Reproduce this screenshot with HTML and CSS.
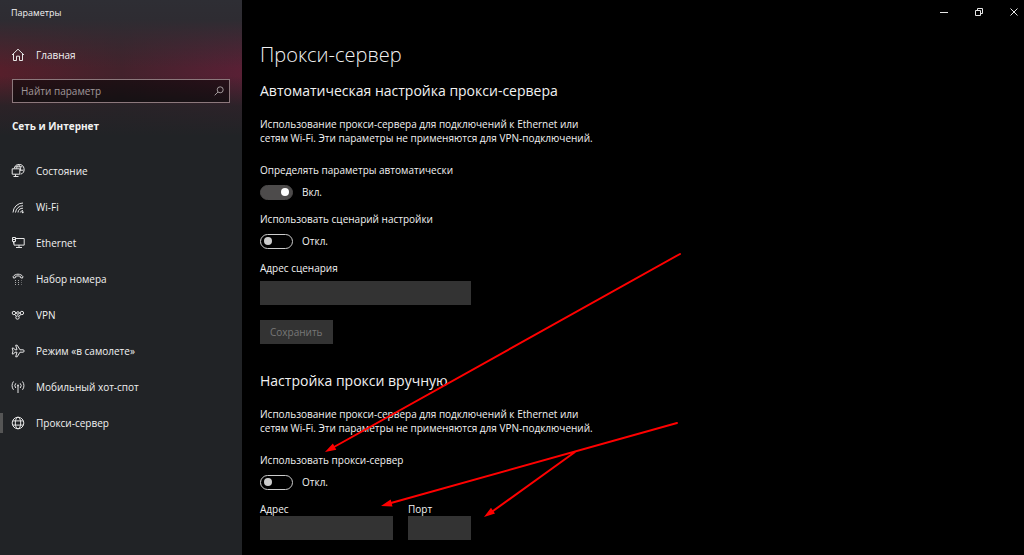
FILE: index.html
```html
<!DOCTYPE html>
<html lang="ru">
<head>
    <meta charset="UTF-8">
    <meta name="viewport" content="width=device-width, initial-scale=1.0">
    <title>Параметры</title>
    <link rel="stylesheet" href="styles.css">
</head>
<body>
    <div class="window">
        <aside class="sidebar">
            <div class="window-title">Параметры</div>
            <a class="nav-link home" href="#">
                <svg class="icon" viewBox="0 0 14 14"><path d="M1 7 7 1.2 13 7M2.5 6v6.500h3V8.200h3v4.300h3V6"/></svg>
                Главная
            </a>
            <form class="search">
                <input type="search" placeholder="Найти параметр" aria-label="Найти параметр">
                <svg class="search-icon" viewBox="0 0 10 10"><circle cx="6.2" cy="3.8" r="3"/><path d="M4 6 .7 9.3"/></svg>
            </form>
            <h2 class="category">Сеть и Интернет</h2>
            <nav>
                <a class="nav-link" href="#">
                    <svg class="icon" viewBox="0 0 14 14"><path d="M3.200 4.500a5 5 0 1 1 6.500 5.700M4 2.800h7.300M7.600.8C6.200 1.800 5.700 3 5.600 4.500M7.600.8c1.700 1.500 2.200 3.500 2 5.700M9 6.200h3.500M1.200 4.800h7.600v5.400H1.200zM4.500 10.200v2.200M2.500 12.500h5"/></svg>
                    Состояние
                </a>
                <a class="nav-link" href="#">
                    <svg class="icon" viewBox="0 0 14 14"><path d="M2 12.500A10 10 0 0 1 12 3M4.500 12.500A7.500 7.500 0 0 1 12 5.700M7 12.500a5 5 0 0 1 5-4.300M9.300 12.500a3 3 0 0 1 2.700-2"/><circle class="solid" cx="11.700" cy="12.200" r="1"/></svg>
                    Wi-Fi
                </a>
                <a class="nav-link" href="#">
                    <svg class="icon" viewBox="0 0 14 14"><path d="M4.500 2.500h8.700v6.600H3V6M8 9v2.500M5 11.500h6M1.500 1.500h3v4h-3zM2.500 5.500v2M1.500 3.500h3"/></svg>
                    Ethernet
                </a>
                <a class="nav-link" href="#">
                    <svg class="icon" viewBox="0 0 14 14"><path d="M2 4.800C4 1.300 10 1.300 12 4.800L11.300 6.200 9.300 5.500V4.300C8 3.800 6 3.800 4.700 4.300v1.200l-2 .7z"/><path class="dots" d="M4 8.500h6.500M4 10.500h6.500M4 12.500h6.500"/></svg>
                    Набор номера
                </a>
                <a class="nav-link" href="#">
                    <svg class="icon" viewBox="0 0 14 14"><circle cx="2.900" cy="5" r="1.700"/><circle cx="6.500" cy="9.500" r="1.700"/><circle cx="10.900" cy="5" r="1.700"/><circle cx="6.900" cy="5" r="1.300"/><path d="M4.500 5h1.200M8.200 5h1M3.800 6.500l1.500 1.800M10 6.500 7.700 8.300"/></svg>
                    VPN
                </a>
                <a class="nav-link" href="#">
                    <svg class="icon" viewBox="0 0 14 14"><path d="M1.200 4h1.300L4 5.800h2L4.700 1.200h1.500L9 5.800h3c1.600 0 1.600 2.400 0 2.400H9l-2.800 4.600H4.700L6 8.200H4L2.500 10H1.200L2 7z"/></svg>
                    Режим «в самолете»
                </a>
                <a class="nav-link" href="#">
                    <svg class="icon" viewBox="0 0 14 14"><path d="M7 5.500V13M4.800 3.300a3.500 3.500 0 0 0 0 4.700M9.200 3.300a3.500 3.500 0 0 1 0 4.700M2.500 1.500C.6 3.800.6 7.500 2.500 9.800M11.500 1.500c1.900 2.300 1.900 6 0 8.300"/><circle class="solid" cx="7" cy="5.500" r=".9"/></svg>
                    Мобильный хот-спот
                </a>
                <a class="nav-link active" href="#">
                    <svg class="icon" viewBox="0 0 14 14"><circle cx="7" cy="7" r="5.800"/><ellipse cx="7" cy="7" rx="2.700" ry="5.800"/><path d="M1.800 4.900h10.400M1.800 9.100h10.400"/></svg>
                    Прокси-сервер
                </a>
            </nav>
        </aside>

        <main class="content">
            <div class="window-buttons">
                <button type="button" aria-label="Свернуть"><svg viewBox="0 0 8 8"><path d="M0 4.500h8"/></svg></button>
                <button type="button" aria-label="Восстановить"><svg viewBox="0 0 8 8"><path d="M.5 2.500h5v5h-5zM2.500 2.500v-2h5v5h-2"/></svg></button>
                <button type="button" aria-label="Закрыть"><svg viewBox="0 0 8 8"><path d="M.5.5l7 7M7.500.5l-7 7"/></svg></button>
            </div>

            <h1>Прокси-сервер</h1>

            <section>
                <h2>Автоматическая настройка прокси-сервера</h2>
                <p>Использование прокси-сервера для подключений к Ethernet или<br>сетям Wi-Fi. Эти параметры не применяются для VPN-подключений.</p>

                <div class="setting">
                    <label for="auto-detect">Определять параметры автоматически</label>
                    <div class="toggle">
                        <input type="checkbox" id="auto-detect" checked>
                        <span>Вкл.</span>
                    </div>
                </div>
                <div class="setting">
                    <label for="use-script">Использовать сценарий настройки</label>
                    <div class="toggle">
                        <input type="checkbox" id="use-script">
                        <span>Откл.</span>
                    </div>
                </div>
                <div class="setting script-address">
                    <label for="script-url">Адрес сценария</label>
                    <input class="field" type="text" id="script-url" disabled>
                </div>
                <button class="save" type="button" disabled>Сохранить</button>
            </section>

            <section>
                <h2>Настройка прокси вручную</h2>
                <p>Использование прокси-сервера для подключений к Ethernet или<br>сетям Wi-Fi. Эти параметры не применяются для VPN-подключений.</p>

                <div class="setting">
                    <label for="use-proxy">Использовать прокси-сервер</label>
                    <div class="toggle">
                        <input type="checkbox" id="use-proxy">
                        <span>Откл.</span>
                    </div>
                </div>
                <div class="proxy-fields">
                    <div class="proxy-address">
                        <label for="address">Адрес</label>
                        <input class="field" type="text" id="address" disabled>
                    </div>
                    <div class="proxy-port">
                        <label for="port">Порт</label>
                        <input class="field" type="text" id="port" disabled>
                    </div>
                </div>
            </section>

            <!-- Arrows pointing at the manual proxy settings -->
            <svg class="arrows" viewBox="0 0 460 300" aria-hidden="true">
                <path d="M438 14 92 207M435 183 149 263M333 212 251 271"/>
                <path class="head" d="M83 212l11.300-2.300-3.400-6.200zM139 266l11.500.4-1.800-6.800zM242 277l11-3.600-4-5.600z"/>
            </svg>
        </main>
    </div>
</body>
</html>
```
FILE: styles.css
```css
* {
    box-sizing: border-box;
}

body {
    margin: 0;
    background-color: #000;
    color: #f2f2f2;
    font-family: "Open Sans", "Noto Sans", sans-serif;
    font-size: 10px;
    line-height: 14px;
}

h1, h2, p {
    margin: 0;
}

input, button {
    margin: 0;
    font: inherit;
    color: inherit;
}

.window {
    display: flex;
    min-height: 100vh;
}

/* Sidebar */
.sidebar {
    flex: 0 0 242px;
    background-color: #212326;
    background-image:
        linear-gradient(#2e2e34 0, #2e2c32 20px, rgba(46, 44, 50, 0) 68px),
        linear-gradient(rgba(33, 35, 38, 0) 76px, rgba(33, 35, 38, 0.8) 106px, #212326 136px),
        linear-gradient(90deg, #561f2b, #43222c 50%, #592035);
}

.window-title {
    padding: 6px 11px;
    font-size: 9px;
}

.nav-link {
    display: flex;
    align-items: center;
    gap: 11px;
    height: 36px;
    padding-left: 11px;
    color: inherit;
    text-decoration: none;
}

.nav-link.active {
    border-style: solid;
    border-width: 0 0 0 3px;
    border-image: linear-gradient(transparent 25%, #555 25%, #555 75%, transparent 75%) 1;
    padding-left: 8px;
}

.home {
    margin-top: 11px;
}

.icon {
    width: 14px;
    height: 14px;
}

svg {
    fill: none;
    stroke: #e6e6e6;
    stroke-width: 1;
}

.solid {
    fill: #e6e6e6;
    stroke: none;
}

.dots {
    stroke: #aaa;
    stroke-dasharray: 1 2;
}

.search {
    display: flex;
    align-items: center;
    height: 24px;
    margin: 6px 12px 0;
    padding: 0 5px 0 8px;
    border: 1px solid #8c787c;
    background-color: rgba(0, 0, 0, 0.5);
}

.search input {
    flex: 1;
    min-width: 0;
    padding: 0;
    border: none;
    outline: none;
    background: none;
}

.search input::placeholder {
    color: #a0989a;
}

.search-icon {
    width: 10px;
    height: 10px;
    stroke: #a0989a;
}

.category {
    margin: 16px 12px 20px;
    font-size: 10px;
    font-weight: 700;
}

/* Content */
.content {
    position: relative;
    flex: 1;
    padding: 0 18px 15px;
}

.window-buttons {
    display: flex;
    justify-content: flex-end;
    gap: 11px;
    height: 24px;
    margin-right: -20px;
}

.window-buttons button {
    width: 24px;
    padding: 0;
    border: none;
    background: none;
}

.window-buttons svg {
    width: 8px;
    height: 8px;
}

h1 {
    margin-top: 15px;
    font-size: 20px;
    font-weight: 300;
    line-height: 32px;
}

.content h2 {
    margin-top: 9px;
    font-size: 14px;
    font-weight: 400;
    line-height: 22px;
}

.content p {
    margin-top: 15px;
}

.setting {
    margin-top: 12px;
}

p + .setting {
    margin-top: 18px;
}

label {
    display: block;
}

.toggle {
    display: flex;
    align-items: center;
    gap: 9px;
    height: 16px;
    margin-top: 7px;
}

.toggle input {
    appearance: none;
    display: flex;
    align-items: center;
    width: 33px;
    height: 15px;
    padding: 0 3px;
    border: 1px solid #ccc;
    border-radius: 8px;
}

.toggle input::before {
    content: "";
    width: 8px;
    height: 8px;
    border-radius: 50%;
    background-color: #ccc;
}

.toggle input:checked {
    justify-content: flex-end;
    border-color: #4d4b4b;
    background-color: #4d4b4b;
}

.toggle input:checked::before {
    background-color: #fff;
}

.field {
    display: block;
    width: 100%;
    height: 24px;
    padding: 0 6px;
    border: none;
    background-color: #333;
}

.script-address {
    max-width: 211px;
}

.script-address .field {
    margin-top: 6px;
}

.save {
    height: 24px;
    margin-top: 15px;
    padding: 0 10px;
    border: none;
    background-color: #333;
    color: #777;
}

section + section {
    margin-top: 26px;
}

.proxy-fields {
    display: flex;
    gap: 15px;
    max-width: 211px;
    margin-top: 12px;
}

.proxy-address {
    flex: 1;
}

.proxy-port {
    flex: 0 0 63px;
}

.arrows {
    position: absolute;
    top: 240px;
    left: 0;
    width: 460px;
    height: 300px;
    stroke: #f00;
    stroke-width: 2;
    stroke-linecap: round;
    pointer-events: none;
}

.head {
    fill: #f00;
    stroke: none;
}
```
